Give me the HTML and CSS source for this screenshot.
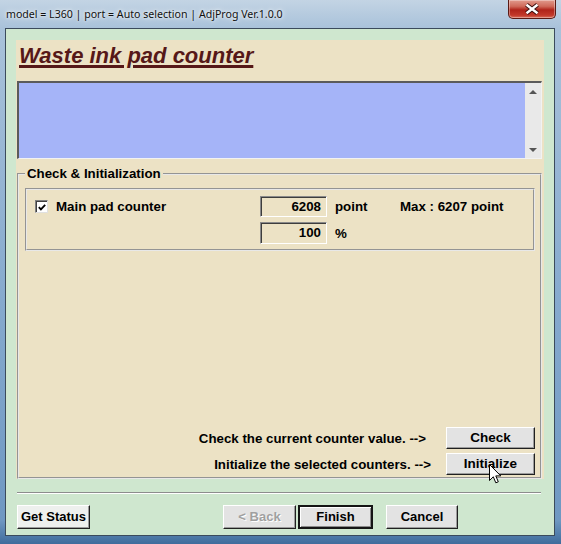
FILE: index.html
```
<!DOCTYPE html>
<html>
<head>
<meta charset="utf-8">
<link rel="stylesheet" href="styles.css">
</head>
<body>
<div class="window">
  <div class="titlebar">
    <span class="title">model = L360 | port = Auto selection | AdjProg Ver.1.0.0</span>
    <div class="close">
      <svg width="18" height="12" viewBox="0 0 18 12"><path d="M3.5 1.8 L14.5 10.2 M14.5 1.8 L3.5 10.2" stroke="#3a1010" stroke-width="4.4" fill="none"/><path d="M3.5 1.8 L14.5 10.2 M14.5 1.8 L3.5 10.2" stroke="#fff" stroke-width="2.4" fill="none"/></svg>
    </div>
  </div>
  <div class="client">
    <div class="panel">
      <h1 class="heading">Waste ink pad counter</h1>
      <div class="log">
        <div class="log-area"></div>
        <div class="scrollbar">
          <span class="arrow up"></span>
          <span class="arrow down"></span>
        </div>
      </div>
      <fieldset class="group">
        <legend>Check &amp; Initialization</legend>
        <div class="counters">
          <div class="chk"><span class="checkbox"><svg width="11" height="11" viewBox="0 0 11 11"><polyline points="2,5 4.3,7.5 9,2.5" fill="none" stroke="#000" stroke-width="2"/></svg></span>Main pad counter</div>
          <div class="field">6208</div>
          <span class="unit">point</span>
          <span class="max">Max : 6207 point</span>
          <div class="field row2">100</div>
          <span class="unit row2u">%</span>
        </div>
        <div class="actions">
          <span class="hint h1">Check the current counter value. --&gt;</span>
          <div class="btn act">Check</div>
          <span class="hint">Initialize the selected counters. --&gt;</span>
          <div class="btn act">Initialize</div>
        </div>
      </fieldset>
    </div>
    <div class="separator"></div>
    <div class="footer">
      <div class="btn status">Get Status</div>
      <div class="nav">
        <div class="btn back">&lt; Back</div>
        <div class="btn finish">Finish</div>
        <div class="btn cancel">Cancel</div>
      </div>
    </div>
  </div>
  <svg class="cursor" width="13" height="21" viewBox="0 0 13 21"><path d="M0.5 0.5 L0.5 16.5 L4.3 12.8 L6.8 18.8 L9.3 17.8 L6.8 11.9 L11.8 11.9 Z" fill="#fff" stroke="#000" stroke-width="1" stroke-linejoin="miter"/></svg>
</div>
</body>
</html>
```
FILE: styles.css
```
* { box-sizing: border-box; }
html, body { margin: 0; padding: 0; }
body {
  width: 561px;
  height: 544px;
  overflow: hidden;
  font-family: "Liberation Sans", Arial, sans-serif;
  font-size: 13.3px;
  font-weight: bold;
  color: #000;
}
.window {
  position: relative;
  width: 561px;
  height: 544px;
  background: linear-gradient(180deg, #c3d4e4 0px, #a9c2da 28px, #86aace 300px, #6f98c2 520px, #3f6c9c 544px);
}
.titlebar {
  height: 28px;
  display: flex;
  align-items: center;
  padding-left: 6px;
}
.title {
  font-family: "Noto Sans", "Open Sans", sans-serif;
  font-weight: normal;
  font-size: 10.6px;
  color: #111;
  text-shadow: 0 0 6px rgba(255,255,255,0.9), 0 0 3px rgba(255,255,255,0.9);
}
.close {
  align-self: flex-start;
  margin-left: auto;
  margin-right: 5px;
  width: 48px;
  height: 19px;
  border: 1px solid #5a1a14;
  border-top: none;
  border-radius: 0 0 5px 5px;
  background: linear-gradient(180deg, #e19a8c 0%, #cf6a5a 35%, #b0241a 55%, #c2392a 85%, #d9705c 100%);
  box-shadow: inset 0 0 0 1px rgba(255,255,255,0.35);
  display: flex;
  align-items: center;
  justify-content: center;
}
.client {
  margin: 0 6px 0 5px;
  height: 508px;
  border: 1px solid #3b4b5c;
  background: #cfe7cf;
  padding: 11px 10px 0 10px;
}
.panel {
  height: 439px;
  background: #ece2c5;
  display: flex;
  flex-direction: column;
}
.heading {
  margin: 0;
  height: 29px;
  padding: 3px 0 0 3px;
  font-size: 22px;
  line-height: 26px;
  font-style: italic;
  font-weight: bold;
  color: #561818;
  text-decoration: underline;
  text-decoration-thickness: 3px;
  text-underline-offset: 2px;
}
.log {
  margin: 12px 0 0 1px;
  width: 525px;
  height: 78px;
  border-top: 2px solid #5b5b5b;
  border-left: 2px solid #5b5b5b;
  border-right: 1px solid #f2f2f2;
  border-bottom: 1px solid #f2f2f2;
  display: flex;
}
.log-area {
  flex: 1;
  background: #a5b4f8;
}
.scrollbar {
  width: 16px;
  background: #e9e9e9;
  display: flex;
  flex-direction: column;
  justify-content: space-between;
  align-items: center;
  padding: 7px 0 6px;
}
.arrow {
  width: 0;
  height: 0;
  border-left: 4px solid transparent;
  border-right: 4px solid transparent;
}
.arrow.up { border-bottom: 4px solid #555; }
.arrow.down { border-top: 4px solid #555; }
.group {
  margin: 7px 0 0 1px;
  width: 525px;
  flex: 1;
  padding: 0 5px 2px 0;
  border: 2px groove #e8e8e8;
  display: flex;
  flex-direction: column;
  min-width: 0;
}
.group legend {
  margin-left: 6px;
  padding: 0 2px;
  line-height: 16px;
}
.counters {
  margin: 6px 0 0 6px;
  border: 2px groove #e8e8e8;
  padding: 6px 0 5px 8px;
  display: grid;
  grid-template-columns: 225px 67px 73px auto;
  grid-template-rows: 21px 22px;
  row-gap: 5px;
  align-items: center;
}
.chk {
  display: flex;
  align-items: center;
  gap: 8px;
}
.checkbox {
  width: 13px;
  height: 13px;
  background: #fff;
  border-top: 1px solid #808080;
  border-left: 1px solid #808080;
  border-right: 1px solid #e0e0e0;
  border-bottom: 1px solid #e0e0e0;
  box-shadow: inset 1px 1px 0 #404040;
  display: flex;
  align-items: center;
  justify-content: center;
  padding: 1px 0 0 1px;
}
.checkbox svg { display: block; }
.field {
  height: 100%;
  border-top: 1px solid #8a8a8a;
  border-left: 1px solid #8a8a8a;
  border-right: 1px solid #ffffff;
  border-bottom: 1px solid #ffffff;
  box-shadow: inset 1px 1px 0 #3d3d3d;
  text-align: right;
  padding-right: 5px;
  line-height: 19px;
}
.field.row2 { grid-column: 2; grid-row: 2; }
.unit { padding-left: 8px; }
.row2u { grid-column: 3; grid-row: 2; }
.actions {
  margin-top: auto;
  display: grid;
  grid-template-columns: auto 89px;
  justify-content: end;
  column-gap: 15px;
  row-gap: 4px;
  align-items: center;
}
.hint { text-align: right; }
.hint.h1 { padding-right: 5px; }
.btn {
  display: flex;
  align-items: center;
  justify-content: center;
  background: #e3e3e3;
  border-top: 1px solid #ffffff;
  border-left: 1px solid #ffffff;
  border-right: 1px solid #202020;
  border-bottom: 1px solid #202020;
  box-shadow: inset -1px -1px 0 #9c9c9c;
  font-size: 13px;
  font-weight: bold;
  padding-bottom: 1px;
}
.btn.act { height: 22px; font-size: 13.5px; }
.separator {
  margin: 13px 3px 0 1px;
  height: 2px;
  border-top: 1px solid #8d8d8d;
  border-bottom: 1px solid #ffffff;
}
.footer {
  margin: 11px 0 0 1px;
  display: flex;
  align-items: center;
}
.footer .btn { height: 24px; }
.status { width: 73px; background: #eef0ee; }
.nav {
  margin-left: 133px;
  display: flex;
}
.back { width: 73px; color: #a0a0a0; text-shadow: 1px 1px 0 #fff; }
.finish {
  width: 75px;
  margin-left: 2px;
  border: 2px solid #151515;
  box-shadow: inset 1px 1px 0 #ffffff, inset -1px -1px 0 #8a8a8a;
}
.cancel { width: 72px; margin-left: 13px; }
.cursor {
  position: absolute;
  left: 489px;
  top: 464px;
}
```
